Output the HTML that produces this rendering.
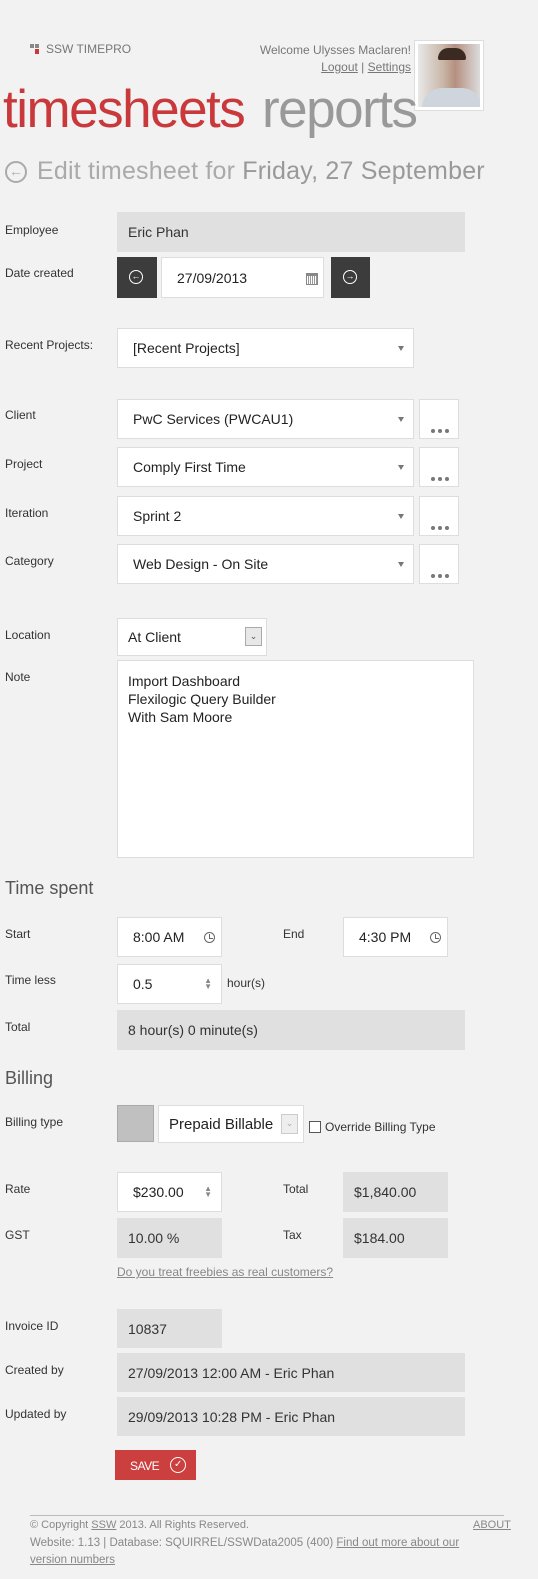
<!DOCTYPE html>
<html><head><meta charset="utf-8"><style>
*{box-sizing:border-box;margin:0;padding:0}
body{width:538px;height:1579px;background:#f2f2f2;font-family:"Liberation Sans",sans-serif;color:#333;position:relative;overflow:hidden}
.a{position:absolute}
.lbl{position:absolute;left:5px;font-size:12px;color:#333}
.f{position:absolute;background:#fff;border:1px solid #ddd;font-size:14px;color:#222;padding-left:15px;display:flex;align-items:center}
.g{position:absolute;background:#e0e0e0;font-size:14px;color:#333;padding-left:11px;display:flex;align-items:center}
.arr{position:absolute;right:9px;top:50%;margin-top:-2px;width:0;height:0;border-left:3.5px solid transparent;border-right:3.5px solid transparent;border-top:5px solid #777}
.dots{position:absolute;background:#fff;border:1px solid #ddd;width:40px;height:40px}
.dots i{position:absolute;top:29px;width:4px;height:4px;border-radius:2px;background:#777}
.spin{position:absolute;right:9px;top:50%;margin-top:-6px;font-size:8px;color:#888;line-height:6px}
.clk{position:absolute;right:6px;top:50%;margin-top:-5px;width:11px;height:11px;border:1.3px solid #666;border-radius:50%}
.clk:after{content:"";position:absolute;left:4px;top:1px;width:3px;height:4px;border-left:1.2px solid #666;border-bottom:1.2px solid #666}
h2{position:absolute;left:5px;font-weight:normal;font-size:18px;color:#555}
.ft{position:absolute;left:30px;font-size:11px;color:#888}
u{text-decoration:underline}
</style></head><body>
<div class="a" style="left:30px;top:44px;width:10px;height:10px">
<div class="a" style="left:0;top:0;width:4px;height:4px;background:#888"></div>
<div class="a" style="left:5px;top:0;width:4px;height:4px;background:#888"></div>
<div class="a" style="left:5px;top:5px;width:4px;height:5px;background:#c9393b"></div></div>
<div class="a" style="left:46px;top:42px;font-size:12px;color:#777">SSW TIMEPRO</div>
<div class="a" style="right:127px;top:42px;font-size:12px;color:#777;text-align:right;line-height:17px">Welcome Ulysses Maclaren!<br><u>Logout</u> | <u>Settings</u></div>
<div class="a" style="left:414px;top:40px;width:70px;height:71px;border:1px solid #ddd;background:#fff;padding:3px">
<div style="width:62px;height:63px;background:linear-gradient(90deg,#e8e8e8,#c9b7a8 40%,#b59080 60%,#dcdcdc);position:relative;overflow:hidden">
<div class="a" style="left:20px;top:4px;width:28px;height:12px;background:#3a2a22;border-radius:12px 12px 2px 2px"></div>
<div class="a" style="left:4px;top:44px;width:60px;height:30px;background:#cfd5dc;border-radius:20px 20px 0 0"></div></div></div>
<div class="a" style="left:3px;top:79px;font-size:53px;color:#c9393b;letter-spacing:-1.5px">timesheets</div>
<div class="a" style="left:262px;top:79px;font-size:53px;color:#999;letter-spacing:-1.5px">reports</div>
<div class="a" style="left:5px;top:161px;width:22px;height:22px;border:2px solid #aaa;border-radius:50%;color:#aaa;font-size:14px;line-height:17px;text-align:center;font-weight:bold">&#8592;</div>
<div class="a" style="left:37px;top:157px;font-size:25px;color:#aaa;letter-spacing:0.2px">Edit timesheet for <span style="color:#999">Friday, 27 September</span></div>

<div class="lbl" style="top:223px">Employee</div>
<div class="g" style="left:117px;top:212px;width:348px;height:40px">Eric Phan</div>
<div class="lbl" style="top:266px">Date created</div>
<div class="a" style="left:117px;top:257px;width:40px;height:41px;background:#3c3c3c"><div class="a" style="left:12px;top:13px;width:14px;height:14px;border:1.5px solid #fff;border-radius:50%;color:#fff;font-size:9px;line-height:11px;text-align:center">&#8592;</div></div>
<div class="f" style="left:161px;top:257px;width:163px;height:41px">27/09/2013
<div class="a" style="right:5px;top:15px;width:12px;height:12px;border:1px solid #888;border-top-width:3px;background:repeating-linear-gradient(90deg,#fff 0 1px,#999 1px 2px)"></div></div>
<div class="a" style="left:331px;top:257px;width:39px;height:41px;background:#3c3c3c"><div class="a" style="left:12px;top:13px;width:14px;height:14px;border:1.5px solid #fff;border-radius:50%;color:#fff;font-size:9px;line-height:11px;text-align:center">&#8594;</div></div>

<div class="lbl" style="top:338px">Recent Projects:</div>
<div class="f" style="left:117px;top:328px;width:297px;height:40px">[Recent Projects]<div class="arr"></div></div>

<div class="lbl" style="top:408px">Client</div>
<div class="f" style="left:117px;top:399px;width:297px;height:40px">PwC Services (PWCAU1)<div class="arr"></div></div>
<div class="dots" style="left:419px;top:399px"><i style="left:11px"></i><i style="left:18px"></i><i style="left:25px"></i></div>
<div class="lbl" style="top:457px">Project</div>
<div class="f" style="left:117px;top:447px;width:297px;height:40px">Comply First Time<div class="arr"></div></div>
<div class="dots" style="left:419px;top:447px"><i style="left:11px"></i><i style="left:18px"></i><i style="left:25px"></i></div>
<div class="lbl" style="top:506px">Iteration</div>
<div class="f" style="left:117px;top:496px;width:297px;height:40px">Sprint 2<div class="arr"></div></div>
<div class="dots" style="left:419px;top:496px"><i style="left:11px"></i><i style="left:18px"></i><i style="left:25px"></i></div>
<div class="lbl" style="top:554px">Category</div>
<div class="f" style="left:117px;top:544px;width:297px;height:40px">Web Design - On Site<div class="arr"></div></div>
<div class="dots" style="left:419px;top:544px"><i style="left:11px"></i><i style="left:18px"></i><i style="left:25px"></i></div>

<div class="lbl" style="top:628px">Location</div>
<div class="f" style="left:117px;top:618px;width:150px;height:38px;padding-left:10px">At Client
<div class="a" style="left:127px;top:8px;width:17px;height:19px;border:1px solid #aaa;background:#e8e8e8;font-size:9px;text-align:center;line-height:16px;color:#555">&#8964;</div></div>
<div class="lbl" style="top:670px">Note</div>
<div class="a" style="left:117px;top:660px;width:357px;height:198px;background:#fff;border:1px solid #ddd;font-size:14px;color:#222;padding:11px 10px;line-height:18px">Import Dashboard<br>Flexilogic Query Builder<br>With Sam Moore</div>

<h2 style="top:878px">Time spent</h2>
<div class="lbl" style="top:927px">Start</div>
<div class="f" style="left:117px;top:917px;width:105px;height:40px">8:00 AM<div class="clk"></div></div>
<div class="lbl" style="left:283px;top:927px">End</div>
<div class="f" style="left:343px;top:917px;width:105px;height:40px">4:30 PM<div class="clk"></div></div>
<div class="lbl" style="top:973px">Time less</div>
<div class="f" style="left:117px;top:964px;width:105px;height:40px">0.5<div class="spin">&#9650;<br>&#9660;</div></div>
<div class="lbl" style="left:227px;top:976px">hour(s)</div>
<div class="lbl" style="top:1020px">Total</div>
<div class="g" style="left:117px;top:1010px;width:348px;height:40px">8 hour(s) 0 minute(s)</div>

<h2 style="top:1068px">Billing</h2>
<div class="lbl" style="top:1115px">Billing type</div>
<div class="a" style="left:117px;top:1105px;width:37px;height:37px;background:#c0c0c0;border:1px solid #aaa"></div>
<div class="f" style="left:158px;top:1105px;width:146px;height:38px;padding-left:10px;font-size:15px">Prepaid Billable
<div class="a" style="left:122px;top:8px;width:17px;height:20px;border:1px solid #ccc;background:#eee;font-size:9px;text-align:center;line-height:17px;color:#aaa">&#8964;</div></div>
<div class="a" style="left:309px;top:1121px;width:12px;height:12px;border:1px solid #555;background:#fff"></div>
<div class="lbl" style="left:325px;top:1120px">Override Billing Type</div>

<div class="lbl" style="top:1182px">Rate</div>
<div class="f" style="left:117px;top:1172px;width:105px;height:40px">$230.00<div class="spin">&#9650;<br>&#9660;</div></div>
<div class="lbl" style="left:283px;top:1182px">Total</div>
<div class="g" style="left:343px;top:1172px;width:105px;height:40px">$1,840.00</div>
<div class="lbl" style="top:1228px">GST</div>
<div class="g" style="left:117px;top:1218px;width:105px;height:40px">10.00 %</div>
<div class="lbl" style="left:283px;top:1228px">Tax</div>
<div class="g" style="left:343px;top:1218px;width:105px;height:40px">$184.00</div>
<div class="lbl" style="left:117px;top:1265px;color:#888"><u>Do you treat freebies as real customers?</u></div>

<div class="lbl" style="top:1319px">Invoice ID</div>
<div class="g" style="left:117px;top:1309px;width:105px;height:39px">10837</div>
<div class="lbl" style="top:1363px">Created by</div>
<div class="g" style="left:117px;top:1353px;width:348px;height:39px">27/09/2013 12:00 AM - Eric Phan</div>
<div class="lbl" style="top:1407px">Updated by</div>
<div class="g" style="left:117px;top:1397px;width:348px;height:39px">29/09/2013 10:28 PM - Eric Phan</div>

<div class="a" style="left:115px;top:1450px;width:81px;height:30px;background:#cc3f3f;color:#fff;font-size:12px;letter-spacing:-0.5px">
<span class="a" style="left:15px;top:9px">SAVE</span>
<div class="a" style="left:55px;top:7px;width:16px;height:16px;border:1.5px solid #fff;border-radius:50%;font-size:10px;line-height:13px;text-align:center">&#10003;</div></div>

<div class="a" style="left:30px;top:1515px;width:474px;height:1px;background:#bbb"></div>
<div class="ft" style="top:1519px">© Copyright <u>SSW</u> 2013. All Rights Reserved.</div>
<div class="ft" style="left:473px;top:1519px"><u>ABOUT</u></div>
<div class="ft" style="top:1535px;line-height:17px;width:460px;font-size:11.5px">Website: 1.13 | Database: SQUIRREL/SSWData2005 (400) <u>Find out more about our version numbers</u></div>
</body></html>
